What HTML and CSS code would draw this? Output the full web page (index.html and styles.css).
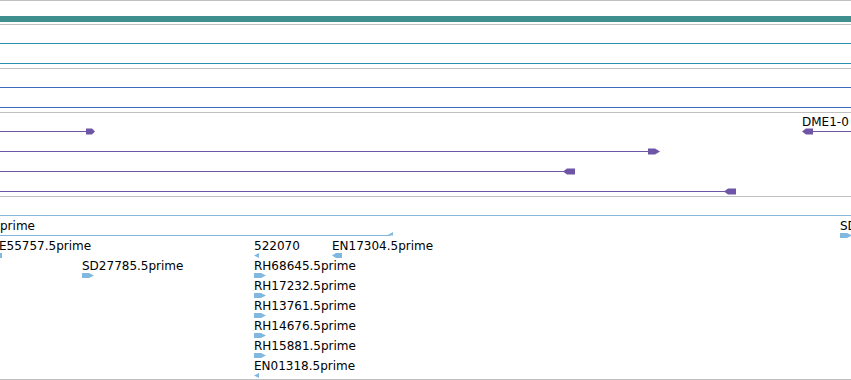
FILE: index.html
```html
<!DOCTYPE html>
<html lang="en">

<head>
  <meta charset="UTF-8">
  <meta name="viewport" content="width=device-width, initial-scale=1.0">
  <title>Track view</title>
  <link rel="stylesheet" href="styles.css">
</head>

<body>
  <div class="tracks">
    <!-- Overview -->
    <div class="track overview">
      <div class="bar"></div>
    </div>

    <!-- Teal track -->
    <div class="track">
      <div class="row"><div class="hline teal"></div></div>
      <div class="row"><div class="hline teal"></div></div>
    </div>

    <!-- Blue track -->
    <div class="track">
      <div class="row"><div class="hline blue"></div></div>
      <div class="row"><div class="hline blue"></div></div>
    </div>

    <!-- Transcripts -->
    <div class="track purple">
      <div class="row">
        <div class="feat" style="left:0">
          <span class="label"></span>
          <svg width="96" height="7"><rect x="0" y="3" width="88" height="1"/><polygon points="86,0.5 92,0.5 95,3.5 92,6.5 86,6.5"/></svg>
        </div>
        <div class="feat" style="left:802px">
          <span class="label">DME1-0</span>
          <svg width="50" height="7"><polygon points="0,3.5 4,0.5 11,0.5 11,6.5 4,6.5"/><rect x="10" y="3" width="40" height="1"/></svg>
        </div>
      </div>
      <div class="row">
        <div class="feat" style="left:0">
          <span class="label"></span>
          <svg width="661" height="7"><rect x="0" y="3" width="650" height="1"/><polygon points="648,0.5 655,0.5 660,3.5 655,6.5 648,6.5"/></svg>
        </div>
      </div>
      <div class="row">
        <div class="feat" style="left:0">
          <span class="label"></span>
          <svg width="576" height="7"><rect x="0" y="3" width="566" height="1"/><polygon points="563,3.5 567,0.5 575,0.5 575,6.5 567,6.5"/></svg>
        </div>
      </div>
      <div class="row">
        <div class="feat" style="left:0">
          <span class="label"></span>
          <svg width="737" height="7"><rect x="0" y="3" width="727" height="1"/><polygon points="724,3.5 728,0.5 736,0.5 736,6.5 728,6.5"/></svg>
        </div>
      </div>
    </div>

    <!-- ESTs -->
    <div class="track est">
      <div class="row"><div class="hline light"></div></div>
      <div class="row">
        <div class="feat" style="left:0">
          <span class="label">prime</span>
          <svg width="394" height="7"><rect x="0" y="3" width="390" height="1"/><polygon points="387,3.5 393,0 393,3.5"/></svg>
        </div>
        <div class="feat" style="left:840px">
          <span class="label">SD</span>
          <svg width="12" height="7"><polygon points="0,1 7,1 12,3.5 7,6 0,6"/></svg>
        </div>
      </div>
      <div class="row">
        <div class="feat" style="left:-1px">
          <span class="label">E55757.5prime</span>
          <svg width="4" height="7"><rect x="1" y="1" width="2" height="5"/></svg>
        </div>
        <div class="feat" style="left:254px">
          <span class="label">522070</span>
          <svg width="6" height="7"><polygon points="0,3.5 5,1 5,6"/></svg>
        </div>
        <div class="feat" style="left:332px">
          <span class="label">EN17304.5prime</span>
          <svg width="11" height="7"><polygon points="0,3.5 4,1 10,1 10,6 4,6"/></svg>
        </div>
      </div>
      <div class="row">
        <div class="feat" style="left:82px">
          <span class="label">SD27785.5prime</span>
          <svg width="13" height="7"><polygon points="0,1 7,1 12,3.5 7,6 0,6"/></svg>
        </div>
        <div class="feat" style="left:254px">
          <span class="label">RH68645.5prime</span>
          <svg width="13" height="7"><polygon points="0,1 7,1 12,3.5 7,6 0,6"/></svg>
        </div>
      </div>
      <div class="row">
        <div class="feat" style="left:254px">
          <span class="label">RH17232.5prime</span>
          <svg width="13" height="7"><polygon points="0,1 7,1 12,3.5 7,6 0,6"/></svg>
        </div>
      </div>
      <div class="row">
        <div class="feat" style="left:254px">
          <span class="label">RH13761.5prime</span>
          <svg width="13" height="7"><polygon points="0,1 7,1 12,3.5 7,6 0,6"/></svg>
        </div>
      </div>
      <div class="row">
        <div class="feat" style="left:254px">
          <span class="label">RH14676.5prime</span>
          <svg width="13" height="7"><polygon points="0,1 7,1 12,3.5 7,6 0,6"/></svg>
        </div>
      </div>
      <div class="row">
        <div class="feat" style="left:254px">
          <span class="label">RH15881.5prime</span>
          <svg width="13" height="7"><polygon points="0,1 7,1 12,3.5 7,6 0,6"/></svg>
        </div>
      </div>
      <div class="row">
        <div class="feat" style="left:254px">
          <span class="label">EN01318.5prime</span>
          <svg width="6" height="7"><polygon points="0,3.5 5,1 5,6"/></svg>
        </div>
      </div>
    </div>
  </div>
</body>

</html>
```

FILE: styles.css
```css
/* Page */
body {
  margin: 0;
  padding: 0;
  background-color: #fff;
  font-family: 'DejaVu Sans', sans-serif;
  font-size: 12px;
  color: #000;
  overflow: hidden;
}

.tracks {
  width: 851px;
  overflow: hidden;
  border-top: 1px solid #c0c0c0;
}

/* Tracks */
.track {
  border-bottom: 1px solid #c0c0c0;
  padding-bottom: 3px;
}

.track.overview {
  height: 24px;
  padding-bottom: 0;
  box-sizing: border-box;
  padding-top: 15px;
}

.bar {
  height: 6px;
  background-color: #3f8f8f;
}

.track.est {
  padding-bottom: 2px;
}

.row {
  position: relative;
  display: flow-root;
  height: 20px;
}

.hline {
  height: 1px;
  margin-top: 18px;
}

.hline.teal {
  background-color: #2a8fae;
}

.hline.blue {
  background-color: #3c6cc0;
}

.hline.light {
  background-color: #86b9dc;
}

/* Features */
.feat {
  position: absolute;
  top: 0;
  display: flex;
  flex-direction: column;
}

.label {
  display: block;
  height: 15px;
  line-height: 18px;
  white-space: nowrap;
}

.feat svg {
  display: block;
}

.purple .feat svg {
  fill: #6f55a6;
}

.est .feat svg {
  fill: #80b8e0;
}
```
